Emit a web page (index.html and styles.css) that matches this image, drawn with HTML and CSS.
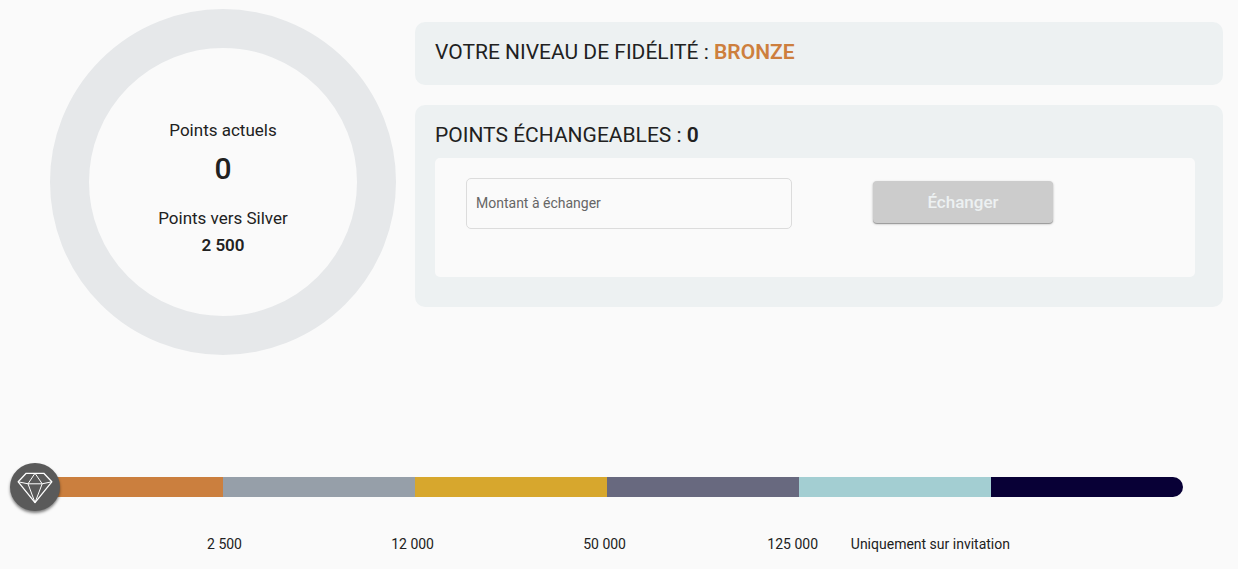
FILE: index.html
```html
<!DOCTYPE html>
<html lang="fr">
<head>
<meta charset="utf-8">
<title>Programme de fidélité</title>
<link rel="stylesheet" href="styles.css">
</head>
<body>
<main class="page">
  <div class="overview">
    <section class="gauge">
      <div class="ring">
        <p class="label">Points actuels</p>
        <p class="current">0</p>
        <p class="label">Points vers Silver</p>
        <p class="remaining">2 500</p>
      </div>
    </section>
    <div class="cards">
      <section class="card level">
        <h2 class="title">VOTRE NIVEAU DE FIDÉLITÉ : <strong class="tier">BRONZE</strong></h2>
      </section>
      <section class="card exchange">
        <h2 class="title">POINTS ÉCHANGEABLES : <strong>0</strong></h2>
        <form class="panel">
          <input class="amount" type="text" placeholder="Montant à échanger" aria-label="Montant à échanger">
          <button class="submit" type="button" disabled>Échanger</button>
        </form>
      </section>
    </div>
  </div>
  <section class="progress">
    <div class="track">
      <span class="segment bronze"></span>
      <span class="segment silver"></span>
      <span class="segment gold"></span>
      <span class="segment platinum"></span>
      <span class="segment diamond"></span>
      <span class="segment elite"></span>
      <span class="marker">
        <svg class="gem" viewBox="0 0 36 34" aria-hidden="true">
          <path class="outline" d="M9.2 3.3H26.8L34.8 11.8L18 32.6L1.2 11.8Z"/>
          <path class="facets" d="M1.2 11.8L11 13.8L18 3.3L25.2 13.8L34.8 11.8M11 13.8H25.2L18 32.6Z"/>
        </svg>
      </span>
    </div>
    <div class="steps">
      <span class="step">2 500</span>
      <span class="step">12 000</span>
      <span class="step">50 000</span>
      <span class="step">125 000</span>
      <span class="step">Uniquement sur invitation</span>
    </div>
  </section>
</main>
</body>
</html>
```
FILE: styles.css
```css
* { box-sizing: border-box; }
body { margin: 0; background: #fafafa; color: #212121; font-family: Roboto, "Liberation Sans", sans-serif; }
p, h2 { margin: 0; }
.page { padding: 9px 15px 0 31px; }
.overview { display: grid; grid-template-columns: 384px 1fr; align-items: start; }
.gauge { display: flex; justify-content: center; }
.ring { width: 346px; height: 346px; border: 39px solid #e6e8ea; border-radius: 50%; padding-top: 70px; text-align: center; }
.label { font-size: 17px; line-height: 24px; }
.current { font-size: 30px; line-height: 40px; font-weight: 500; margin: 7px 0 17px; }
.remaining { font-size: 17px; line-height: 30px; font-weight: 600; }
.cards { display: grid; gap: 20px; padding-top: 13px; }
.card { background: #edf1f2; border-radius: 10px; padding: 16px 28px 30px 20px; }
.level { padding-bottom: 19px; }
.title { font-size: 21px; line-height: 28px; font-weight: 400; }
.title strong { font-weight: 600; }
.title .tier { color: #cd7f3e; }
.panel { display: grid; grid-template-columns: 1fr 1fr; align-items: start; margin-top: 9px; padding: 20px 31px 48px; background: #fafafa; border-radius: 5px; }
.amount { width: 326px; max-width: 100%; height: 51px; padding: 0 9px 2px; border: 1px solid #dcdcdc; border-radius: 5px; background: transparent; font: 14px Roboto, sans-serif; }
.amount::placeholder { color: #666; opacity: 1; }
.submit { width: 180px; height: 42px; margin: 3px 0 0 58px; border: 0; border-radius: 4px; background: #ccc; color: #edf1f2; font: 500 17px Roboto, sans-serif; box-shadow: 0 1px 1px rgba(0,0,0,.3), 0 1px 3px rgba(0,0,0,.2); }
.progress { padding-right: 40px; margin-top: 122px; }
.track { position: relative; display: grid; grid-template-columns: repeat(6, 1fr); height: 20px; }
.segment:first-child { border-radius: 10px 0 0 10px; }
.bronze { background: #cb7f3e; }
.silver { background: #969fa9; }
.gold { background: #d7a72d; }
.platinum { background: #68697f; }
.diamond { background: #a3ced2; }
.elite { background: #080036; border-radius: 0 10px 10px 0; }
.marker { position: absolute; left: -21px; top: -14px; width: 50px; height: 48px; border-radius: 50%; background: #5a5a5a; display: flex; align-items: center; justify-content: center; box-shadow: 0 2px 3px rgba(0,0,0,.5); }
.gem { width: 36px; height: 34px; fill: none; stroke: #fff; stroke-linejoin: round; }
.outline { stroke-width: 1.3; }
.facets { stroke-width: 1; }
.steps { display: grid; grid-template-columns: repeat(6, 1fr); margin: 37px -19px 0 19px; font-size: 14px; line-height: 20px; }
.step { text-align: right; white-space: nowrap; }
```
